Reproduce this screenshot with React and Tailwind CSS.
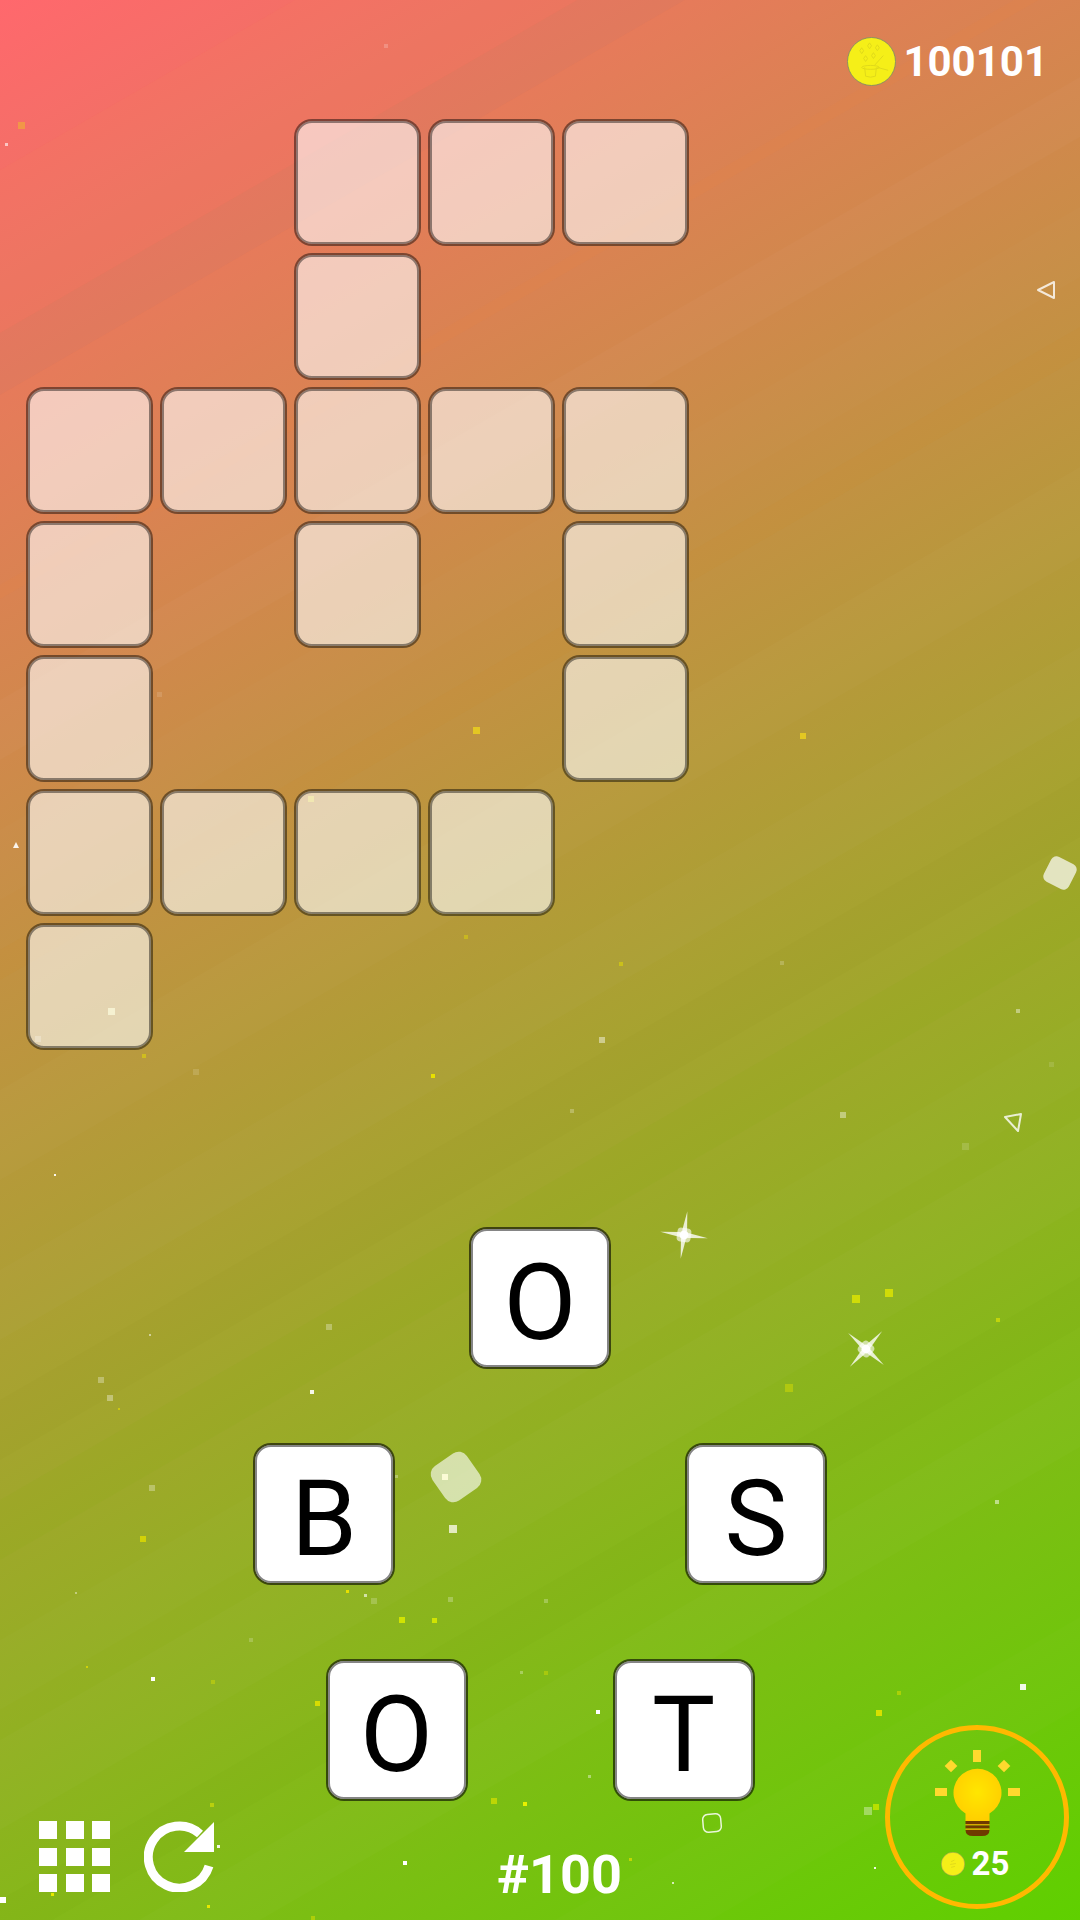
import React from "react";

const layout = [
  [0, 0, 1, 1, 1],
  [0, 0, 1, 0, 0],
  [1, 1, 1, 1, 1],
  [1, 0, 1, 0, 1],
  [1, 0, 0, 0, 1],
  [1, 1, 1, 1, 0],
  [1, 0, 0, 0, 0],
];

// [y at left edge, thickness, colour, opacity] of the diagonal stripes
const bands = [
  [0, 170, "#ff5088", 0.08],
  [170, 163, "#ff6a80", 0.05],
  [333, 62, "#a07080", 0.08],
  [395, 100, "#ff9050", 0.02],
  [585, 14, "#ff9030", 0.08],
  [700, 60, "#ffffff", 0.022],
  [830, 70, "#ffffff", 0.015],
  [950, 30, "#e08a10", 0.06],
  [1090, 90, "#ffffff", 0.018],
  [1270, 70, "#ffffff", 0.02],
  [1400, 60, "#808000", 0.04],
  [1500, 60, "#80b000", 0.08],
  [1640, 70, "#ffffff", 0.015],
  [1740, 90, "#ffffff", 0.02],
  [1900, 50, "#60a000", 0.05],
  [2000, 70, "#ffffff", 0.02],
  [2240, 90, "#ffffff", 0.015],
];

// [x, y, size, colour, opacity]
const dots = [
  [18, 122, 7, "#f0a040", 0.8], [5, 143, 3, "#ffffff", 0.6], [384, 44, 4, "#ffffff", 0.2],
  [473, 727, 7, "#e8cc20", 0.9], [800, 733, 6, "#e8cc20", 0.9], [157, 692, 5, "#ffffff", 0.12],
  [308, 796, 6, "#e8d840", 0.7], [108, 1008, 7, "#f2eda0", 0.8], [35, 1036, 6, "#ffffff", 0.25],
  [431, 1074, 4, "#e8e000", 1], [599, 1037, 6, "#ffffff", 0.45], [193, 1069, 6, "#ffffff", 0.14],
  [142, 1054, 4, "#e8e000", 0.5], [570, 1109, 4, "#ffffff", 0.25], [840, 1112, 6, "#ffffff", 0.4],
  [962, 1143, 7, "#ffffff", 0.15], [54, 1174, 2, "#ffffff", 0.9], [1016, 1009, 4, "#ffffff", 0.4],
  [619, 962, 4, "#e8e000", 0.5], [780, 961, 4, "#ffffff", 0.2], [464, 935, 4, "#e8e000", 0.4],
  [1049, 1062, 5, "#ffffff", 0.12], [852, 1295, 8, "#d0dc08", 1], [885, 1289, 8, "#d0dc08", 1],
  [996, 1318, 4, "#d0dc08", 0.8], [785, 1384, 8, "#b0c810", 1], [326, 1324, 6, "#ffffff", 0.3],
  [98, 1377, 6, "#ffffff", 0.3], [107, 1395, 6, "#ffffff", 0.35], [310, 1390, 4, "#ffffff", 0.9],
  [149, 1334, 2, "#ffffff", 0.5], [118, 1408, 2, "#e8e000", 0.6], [149, 1485, 6, "#ffffff", 0.3],
  [140, 1536, 6, "#e0dc00", 0.8], [442, 1474, 6, "#f5f590", 1], [449, 1525, 8, "#e4ebc0", 1],
  [395, 1475, 3, "#ffffff", 0.3], [995, 1500, 4, "#ffffff", 0.5], [346, 1590, 3, "#e8e000", 1],
  [364, 1594, 3, "#ffffff", 0.6], [75, 1592, 2, "#ffffff", 0.4], [371, 1598, 6, "#ffffff", 0.2],
  [448, 1597, 5, "#ffffff", 0.25], [544, 1599, 4, "#ffffff", 0.25], [399, 1617, 6, "#d8e800", 0.9],
  [432, 1618, 5, "#d8e800", 0.9], [249, 1638, 4, "#ffffff", 0.2], [151, 1677, 4, "#ffffff", 1],
  [86, 1666, 2, "#e8e000", 0.7], [315, 1701, 5, "#e0e000", 0.9], [211, 1680, 4, "#e0e000", 0.4],
  [544, 1671, 4, "#e0e000", 0.4], [520, 1671, 3, "#ffffff", 0.3], [596, 1710, 4, "#ffffff", 1],
  [588, 1775, 3, "#ffffff", 0.4], [491, 1798, 6, "#d8e000", 0.7], [523, 1802, 4, "#e8f000", 1],
  [876, 1710, 6, "#d8e000", 1], [1020, 1684, 6, "#ffffff", 0.9], [864, 1807, 8, "#ffffff", 0.35],
  [873, 1804, 6, "#b8e000", 1], [210, 1803, 4, "#d0dc08", 0.7], [217, 1845, 3, "#ffffff", 0.9],
  [51, 1893, 3, "#e8e800", 1], [207, 1905, 3, "#e8e800", 1], [403, 1861, 4, "#ffffff", 1],
  [629, 1858, 3, "#e0e000", 0.7], [672, 1882, 2, "#ffffff", 0.7], [0, 1897, 6, "#ffffff", 1],
  [311, 1916, 4, "#e0e000", 0.5], [874, 1867, 2, "#ffffff", 0.9], [897, 1691, 4, "#e0e000", 0.5],
];

const Sparkle = ({ x, y, rotate }) => (
  <g transform={`translate(${x} ${y}) rotate(${rotate})`} fill="#ffffff">
    <polygon points="-2.5,-4 0,-24 2.5,-4" opacity="0.8" />
    <polygon points="-2.5,4 0,24 2.5,4" opacity="0.8" />
    <polygon points="-4,-2.5 -24,0 -4,2.5" opacity="0.8" />
    <polygon points="4,-2.5 24,0 4,2.5" opacity="0.8" />
    <rect x="-7" y="-7" width="14" height="14" rx="4" opacity="0.6" />
    <circle r="4.5" />
  </g>
);

const Backdrop = () => (
  <svg className="absolute inset-0 w-[1080px] h-[1920px]" viewBox="0 0 1080 1920">
    {bands.map(([y, h, c, o]) => (
      <polygon
        key={y}
        points={`0,${y} 1080,${y - 623} 1080,${y - 623 + h} 0,${y + h}`}
        fill={c}
        opacity={o}
      />
    ))}
    {dots.map(([x, y, s, c, o], i) => (
      <rect key={i} x={x} y={y} width={s} height={s} fill={c} opacity={o} />
    ))}
    <rect x="435" y="1456" width="42" height="42" rx="10" fill="#ffffff" opacity="0.62" transform="rotate(-35 456 1477)" />
    <rect x="1046" y="859" width="28" height="28" rx="6" fill="#ffffff" opacity="0.7" transform="rotate(27 1060 873)" />
    <rect x="703" y="1814" width="18" height="18" rx="5" fill="none" stroke="#ffffff" strokeWidth="1.5" opacity="0.85" transform="rotate(-5 712 1823)" />
    <path d="M1054 282 L1054 298 L1038 290 Z" fill="none" stroke="#ffffff" strokeWidth="2" strokeLinejoin="round" opacity="0.8" />
    <path d="M1005 1117 L1021 1114 L1018 1131 Z" fill="none" stroke="#ffffff" strokeWidth="2" strokeLinejoin="round" opacity="0.8" />
    <path d="M16 842 L19 848 L13 848 Z" fill="#ffffff" opacity="0.9" />
    <Sparkle x={684} y={1235} rotate={8} />
    <Sparkle x={866} y={1349} rotate={42} />
  </svg>
);

const Coin = ({ className, detail = true }) => (
  <svg className={className} viewBox="0 0 50 50">
    <circle cx="25" cy="25" r="24.5" fill="#f5ef18" stroke="#8a9060" strokeWidth="1" />
    {detail ? (
      <g fill="none" stroke="#dfd91a" strokeWidth="1">
        <path d="M18 31 L19 40 Q24 42 29 40 L30 31" />
        <ellipse cx="24" cy="31" rx="9" ry="2" />
        <path d="M28 29 L37 19 M31 31 L42 34" />
        <path d="M13 14 l2 -3 l2 3 l-2 3 Z M21 9 l2 -3 l2 3 l-2 3 Z M29 11 l2 -3 l2 3 l-2 3 Z M17 22 l2 -3 l2 3 l-2 3 Z M25 19 l2 -3 l2 3 l-2 3 Z" />
      </g>
    ) : (
      <path d="M21 20 L28 17 M19 26 L31 24 M21 32 L29 30" stroke="#d9d31a" strokeWidth="1.5" />
    )}
  </svg>
);

const Bulb = () => (
  <svg className="w-[85px] h-[86px]" viewBox="0 0 85 86">
    <defs>
      <radialGradient id="glow" cx="50%" cy="45%" r="55%">
        <stop offset="0%" stopColor="#ffe600" />
        <stop offset="100%" stopColor="#ffcf00" />
      </radialGradient>
    </defs>
    <g fill="#ffd92e">
      <rect x="38" y="0" width="8" height="12" />
      <rect x="0" y="38" width="12" height="8" />
      <rect x="73" y="38" width="12" height="8" />
      <rect x="11.5" y="11.5" width="9" height="9" transform="rotate(45 16 16)" />
      <rect x="64.5" y="11.5" width="9" height="9" transform="rotate(45 69 16)" />
    </g>
    <path d="M30.5 71 L30.5 63.5 A24 24 0 1 1 54.5 63.5 L54.5 71 Z" fill="url(#glow)" />
    <rect x="30.5" y="71" width="24" height="3" fill="#6f3a00" />
    <rect x="30.5" y="74" width="24" height="1.5" fill="#d8a800" />
    <rect x="30.5" y="75.5" width="24" height="3" fill="#6f3a00" />
    <rect x="30.5" y="78.5" width="24" height="1.5" fill="#d8a800" />
    <path d="M30.5 80 L54.5 80 Q54.5 86 47 86 L38 86 Q30.5 86 30.5 80 Z" fill="#6f3a00" />
  </svg>
);

const Cell = ({ filled }) =>
  filled ? (
    <div className="h-[127px] rounded-[18px] bg-white/60 bg-clip-padding border-2 border-black/45 shadow-[inset_0_0_0_2px_rgba(0,0,0,0.42)]" />
  ) : (
    <div className="h-[127px]" />
  );

const Tile = ({ letter }) => (
  <div className="w-[142px] h-[142px] flex items-center justify-center pt-[10px] rounded-[18px] bg-white bg-clip-padding border-2 border-black/60 shadow-[inset_0_0_0_2px_#858585] text-[106px] leading-none text-black">
    {letter}
  </div>
);

const App = () => {
  return (
    <div className="relative w-[1080px] h-[1920px] overflow-hidden font-['Roboto',sans-serif] bg-[linear-gradient(150deg,#ff6b6b,#5fd000)]">
      <Backdrop />
      <div className="relative flex flex-col">
        {/* coins */}
        <div className="flex items-center justify-end gap-[7px] pt-[37px] pr-[32px] h-[86px]">
          <Coin className="w-[49px] h-[49px]" />
          <span className="text-[42px] leading-none font-bold text-white">100101</span>
        </div>

        {/* crossword */}
        <div className="grid grid-cols-[repeat(5,127px)] gap-[7px] mt-[33px] ml-[26px]">
          {layout.flat().map((filled, i) => (
            <Cell key={i} filled={filled === 1} />
          ))}
        </div>

        {/* letter wheel */}
        <div className="flex flex-col items-center gap-[74px] mt-[177px]">
          <Tile letter="O" />
          <div className="flex gap-[290px]">
            <Tile letter="B" />
            <Tile letter="S" />
          </div>
          <div className="flex gap-[145px]">
            <Tile letter="O" />
            <Tile letter="T" />
          </div>
        </div>

        {/* bottom bar */}
        <div className="flex items-start -mt-[76px] pl-[39px] pr-[11px] h-[184px]">
          <div className="grid grid-cols-3 gap-[8.5px] w-[71px] mt-[96px]">
            {Array.from({ length: 9 }).map((_, i) => (
              <div key={i} className="h-[18px] bg-white" />
            ))}
          </div>
          <svg className="w-[71px] h-[71px] ml-[34px] mt-[96px]" viewBox="0 0 71 71">
            <path d="M65 45 A31 31 0 1 1 56 13" fill="none" stroke="#ffffff" strokeWidth="9" />
            <polygon points="70,1 70,31 40,31" fill="#ffffff" />
          </svg>
          <span className="ml-[282px] mt-[117px] text-[54px] leading-[66px] font-bold text-white">#100</span>
          <div className="ml-auto w-[184px] h-[184px] rounded-full border-[5px] border-[#ffb900] flex flex-col items-center pt-[20px]">
            <Bulb />
            <div className="flex items-center gap-[7px] mt-[11px] -ml-[4px]">
              <Coin className="w-[24px] h-[24px]" detail={false} />
              <span className="text-[33px] leading-none font-bold text-white">25</span>
            </div>
          </div>
        </div>
      </div>
    </div>
  );
};

export default App;
